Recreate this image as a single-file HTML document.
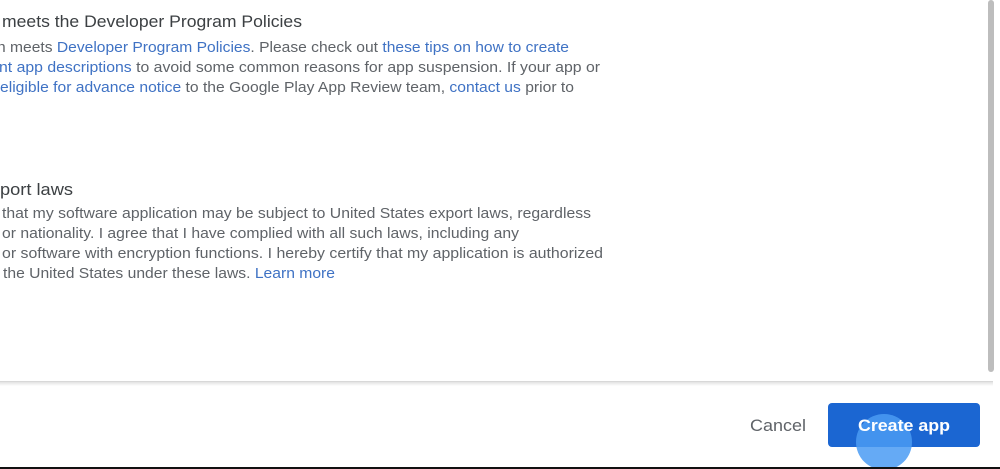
<!DOCTYPE html>
<html><head><style>
html,body{margin:0;padding:0;background:#fff;width:1000px;height:469px;overflow:hidden;position:relative;font-family:"Liberation Sans",sans-serif}
svg{position:absolute;left:0;top:0}
</style></head><body>
<svg width="1000" height="469" viewBox="0 0 1000 469">
<defs><linearGradient id="sh" x1="0" y1="0" x2="0" y2="1"><stop offset="0" stop-color="#e3e3e3"/><stop offset="1" stop-color="#fff"/></linearGradient></defs>
<g font-family="Liberation Sans, sans-serif">
<text x="2" y="27" font-size="17" fill="#3c4043" textLength="300" lengthAdjust="spacingAndGlyphs">meets the Developer Program Policies</text>
<g font-size="14.5" fill="#5f6368">
<text x="-3" y="52" textLength="572" lengthAdjust="spacingAndGlyphs">n meets <tspan fill="#3f72c4">Developer Program Policies</tspan>. Please check out <tspan fill="#3f72c4">these tips on how to create</tspan></text>
<text x="-1" y="72" textLength="601" lengthAdjust="spacingAndGlyphs"><tspan fill="#3f72c4">nt app descriptions</tspan> to avoid some common reasons for app suspension. If your app or</text>
<text x="0" y="92" textLength="574" lengthAdjust="spacingAndGlyphs"><tspan fill="#3f72c4">eligible for advance notice</tspan> to the Google Play App Review team, <tspan fill="#3f72c4">contact us</tspan> prior to</text>
</g>
<text x="0" y="195" font-size="17" fill="#3c4043" textLength="73" lengthAdjust="spacingAndGlyphs">port laws</text>
<g font-size="14.5" fill="#5f6368">
<text x="2" y="218" textLength="589" lengthAdjust="spacingAndGlyphs">that my software application may be subject to United States export laws, regardless</text>
<text x="2" y="238" textLength="517" lengthAdjust="spacingAndGlyphs">or nationality. I agree that I have complied with all such laws, including any</text>
<text x="2" y="258" textLength="601" lengthAdjust="spacingAndGlyphs">or software with encryption functions. I hereby certify that my application is authorized</text>
<text x="3" y="278" textLength="332" lengthAdjust="spacingAndGlyphs">the United States under these laws. <tspan fill="#3f72c4">Learn more</tspan></text>
</g>
</g>
<rect x="988" y="0" width="6" height="372" rx="3" fill="#bdbdbd"/>
<rect x="0" y="381" width="993" height="1" fill="#d8d8d8"/>
<rect x="0" y="382" width="993" height="4" fill="url(#sh)"/>
<text x="750" y="431" font-size="17" fill="#5f6368" font-family="Liberation Sans, sans-serif" textLength="56" lengthAdjust="spacingAndGlyphs">Cancel</text>
<rect x="828" y="403" width="152" height="44" rx="4" fill="#1b66d2"/>
<circle cx="884" cy="442" r="28" fill="#4a9bf3" opacity="0.85"/>
<text x="858" y="431" font-size="17" font-weight="bold" fill="#fff" font-family="Liberation Sans, sans-serif" textLength="92" lengthAdjust="spacingAndGlyphs">Create app</text>
<rect x="0" y="467" width="1000" height="2" fill="#111"/>
</svg>
</body></html>
